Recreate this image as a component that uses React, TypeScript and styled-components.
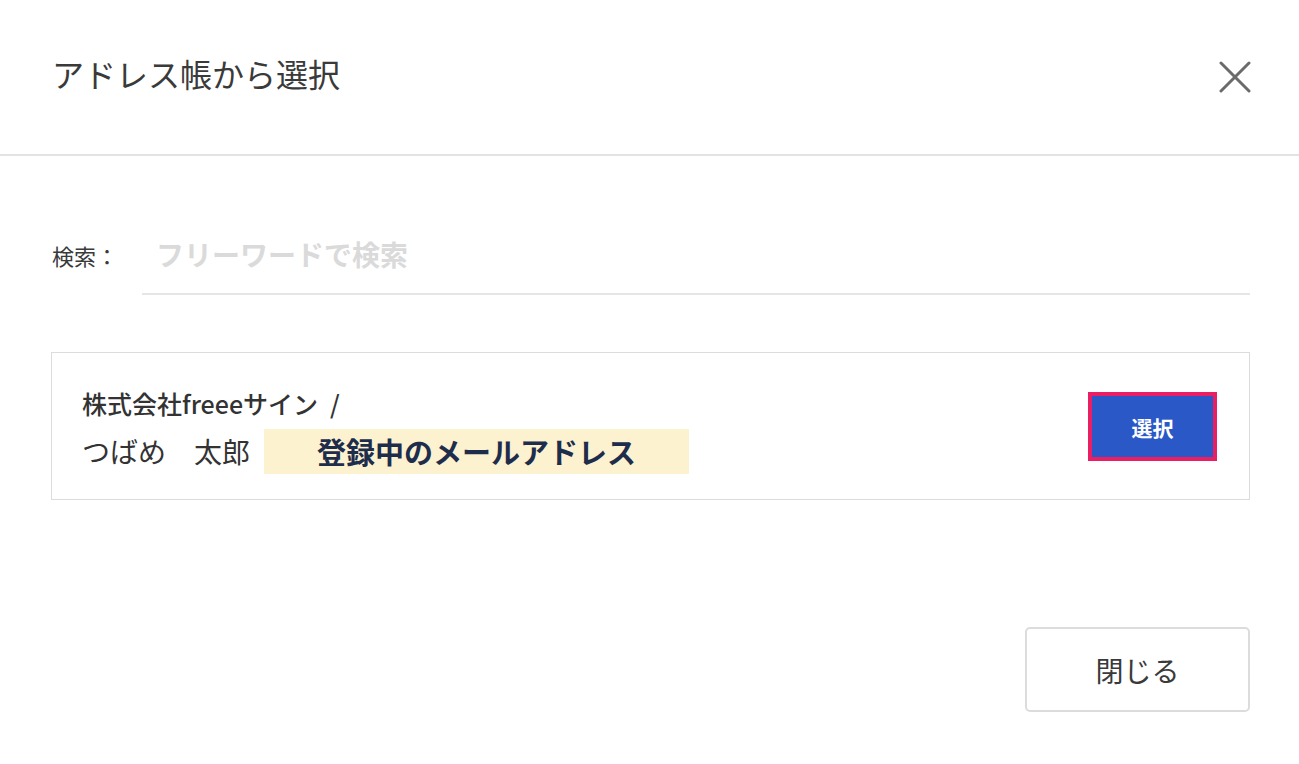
import { createGlobalStyle } from "styled-components";
import styled from "styled-components";

const GlobalStyle = createGlobalStyle`
    body {
        margin: 0;
        background: #fff;
        font-family: "Noto Sans CJK JP", "Noto Sans", sans-serif;
        color: #333;
    }
`;

const Dialog = styled("div")`
    width: 1299px;
    height: 764px;
    background: #fff;
`;

const Header = styled("div")`
    height: 156px;
    display: flex;
    align-items: center;
    justify-content: space-between;
    padding: 0 46px 0 52px;
    border-bottom: 2px solid #e3e3e3;
    box-sizing: border-box;
`;

const Title = styled("h1")`
    margin: 0 0 8px;
    font-size: 32px;
    font-weight: 400;
    color: #3a3a3a;
`;

const CloseIcon = styled("button")`
    width: 36px;
    height: 36px;
    padding: 0;
    border: none;
    background: none;
    display: flex;
    align-items: center;
    justify-content: center;
    cursor: pointer;
`;

const Body = styled("div")`
    padding: 0 49px 0 51px;
`;

const SearchRow = styled("div")`
    margin-top: 59px;
    display: flex;
    align-items: center;
`;

const SearchLabel = styled("label")`
    width: 90px;
    padding-left: 1px;
    font-size: 22px;
    color: #3a3a3a;
`;

const SearchInput = styled("input")`
    flex: 1;
    height: 80px;
    padding: 0 0 0 14px;
    border: none;
    border-bottom: 2px solid #e6e6e6;
    font-family: inherit;
    font-size: 28px;
    font-weight: 700;
    outline: none;
    box-sizing: border-box;

    &::placeholder {
        color: #dadada;
    }
`;

const Card = styled("div")`
    margin-top: 57px;
    border: 1px solid #dcdcdc;
    height: 148px;
    box-sizing: border-box;
    padding: 0 32px 0 30px;
    display: flex;
    align-items: center;
    justify-content: space-between;
`;

const Info = styled("div")`
    display: flex;
    flex-direction: column;
    gap: 10px;
    margin-top: 8px;
`;

const Company = styled("div")`
    font-size: 25px;
    font-weight: 500;
    line-height: 32px;
    color: #333;
`;

const Slash = styled("span")`
    margin-left: 12px;
`;

const NameRow = styled("div")`
    display: flex;
    align-items: center;
`;

const Name = styled("span")`
    font-size: 28px;
    color: #333;
    margin-right: 14px;
`;

const Email = styled("span")`
    height: 45px;
    padding: 0 53px;
    display: flex;
    align-items: center;
    background: #fdf2d0;
    color: #1e2d4c;
    font-size: 29px;
    font-weight: 700;
`;

const SelectButton = styled("button")`
    width: 129px;
    height: 69px;
    background: #2a58c6;
    border: 4px solid #e91e63;
    color: #fff;
    font-family: inherit;
    font-size: 21px;
    font-weight: 700;
    cursor: pointer;
    margin-top: 1px;
`;

const Footer = styled("div")`
    margin-top: 127px;
    display: flex;
    justify-content: flex-end;
`;

const CloseButton = styled("button")`
    width: 225px;
    height: 85px;
    background: #fff;
    border: 2px solid #dcdcdc;
    border-radius: 5px;
    font-family: inherit;
    font-size: 28px;
    color: #3a3a3a;
    cursor: pointer;
`;

export default function App() {
    return (
        <>
            <GlobalStyle />
            <Dialog>
                <Header>
                    <Title>アドレス帳から選択</Title>
                    <CloseIcon aria-label="閉じる">
                        <svg width="32" height="32" viewBox="0 0 32 32">
                            <path
                                d="M2 2 L30 30 M30 2 L2 30"
                                stroke="#6b6b6b"
                                strokeWidth="3"
                                strokeLinecap="round"
                            />
                        </svg>
                    </CloseIcon>
                </Header>
                <Body>
                    <SearchRow>
                        <SearchLabel>検索：</SearchLabel>
                        <SearchInput placeholder="フリーワードで検索" />
                    </SearchRow>
                    <Card>
                        <Info>
                            <Company>
                                株式会社freeeサイン<Slash>/</Slash>
                            </Company>
                            <NameRow>
                                <Name>つばめ　太郎</Name>
                                <Email>登録中のメールアドレス</Email>
                            </NameRow>
                        </Info>
                        <SelectButton>選択</SelectButton>
                    </Card>
                    <Footer>
                        <CloseButton>閉じる</CloseButton>
                    </Footer>
                </Body>
            </Dialog>
        </>
    );
}
